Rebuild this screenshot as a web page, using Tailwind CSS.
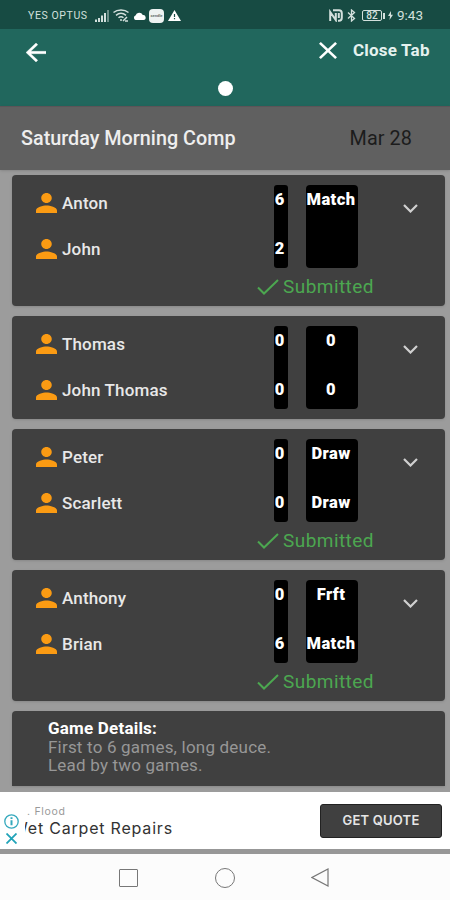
<!DOCTYPE html>
<html lang="en">
<head>
  <meta charset="UTF-8" />
  <meta name="viewport" content="width=device-width, initial-scale=1.0"/>
  <title>Saturday Morning Comp</title>
  <script src="https://cdn.jsdelivr.net/npm/@tailwindcss/browser@4"></script>
</head>
<body class="h-[900px] w-[450px] overflow-hidden bg-[#9c9c9c] font-['Roboto',sans-serif] flex flex-col">

  <!-- Status bar -->
  <div class="h-[29px] shrink-0 bg-[#174b43] text-[#d3e0dd] flex items-center justify-between pl-7 pr-[27px] pt-0.5">
    <div class="flex items-center">
      <span class="text-[10.5px] leading-none tracking-[.6px] pt-0.5 w-[67px] whitespace-nowrap">YES OPTUS</span>
      <svg class="w-[14px] h-3" viewBox="0 0 14 12" fill="currentColor"><path d="M0 9.500h2V12H0zM3 8h2v4H3zM6 5.500h2V12H6zM9 3h2v9H9z"/><path d="M12 0h2v12h-2z" opacity=".45"/></svg>
      <svg class="w-4 h-[13px] ml-1" viewBox="0 0 16 13" fill="none" stroke="currentColor" stroke-width="1.500"><path d="M.5 3.500C4.500 0 11.500 0 15.500 3.500M3 6.300c3-2.500 7-2.500 10 0M5.500 8.800c1.500-1.300 3.500-1.300 5 0"/><path d="M7 11h2M10 12l4-4M12 12h3"/></svg>
      <svg class="w-[13px] h-2 ml-1" viewBox="0 0 13 8" fill="#fff"><path d="M2.500 8a2.400 2.400 0 0 1 0-4.500A4 4 0 0 1 9.800 3 2.500 2.500 0 0 1 10.500 8z"/></svg>
      <span class="w-[15px] h-[14px] ml-[3px] rounded-sm bg-[#edf2f1] text-[#68706e] text-[4px] font-bold leading-[13px] text-center">sendle</span>
      <svg class="w-[13px] h-[11px] ml-1" viewBox="0 0 13 11"><path d="M6.500 0 13 11H0z" fill="#fff"/><path d="M6.500 4v3M6.500 8v1.300" stroke="#174b43" stroke-width="1.200"/></svg>
    </div>
    <div class="flex items-center">
      <svg class="w-[14px] h-[13px]" viewBox="0 0 14 13" fill="none" stroke="currentColor" stroke-width="2"><path d="M1.200 12V3l5.600 8V4M4 1.200h6q2.800 0 2.800 3v4.600q0 3-2.800 3H9M9.800 4v5"/></svg>
      <svg class="w-[9px] h-[13px] ml-1" viewBox="0 0 9 13" fill="none" stroke="currentColor" stroke-width="1.300"><path d="m1 3.500 6.500 6L4.500 12V1l3 2.500-6.500 6"/></svg>
      <span class="w-5 h-[11px] ml-1.5 border border-current rounded-xs text-[10px] leading-[9px] text-center font-medium">82</span>
      <span class="w-0.5 h-1.5 ml-px bg-current"></span>
      <svg class="w-[5px] h-[9px] ml-[3px]" viewBox="0 0 5 9" fill="currentColor"><path d="M3 0 0 5h2L1.500 9 5 3.800H3z"/></svg>
      <span class="text-[13.5px] leading-none ml-1">9:43</span>
    </div>
  </div>

  <!-- App bar -->
  <header class="h-[77px] shrink-0 bg-[#21675d] text-white flex flex-col">
    <div class="h-[46px] flex items-center pl-[26px] pr-5">
      <svg class="w-5 h-[19px]" viewBox="4 4 16 16" preserveAspectRatio="none" fill="currentColor" stroke="currentColor" stroke-width=".3"><path d="M20 11H7.830l5.590-5.590L12 4l-8 8 8 8 1.410-1.410L7.830 13H20v-2z"/></svg>
      <svg class="w-[18px] h-[17px] ml-auto mb-1" viewBox="5 5 14 14" preserveAspectRatio="none" fill="currentColor"><path d="M19 6.410 17.590 5 12 10.590 6.410 5 5 6.410 10.590 12 5 17.590 6.410 19 12 13.410 17.590 19 19 17.590 13.410 12z"/></svg>
      <span class="ml-4 mb-[3px] w-[77px] whitespace-nowrap text-[17px] leading-none tracking-[.2px] font-bold text-[#e5f2ef]">Close Tab</span>
    </div>
    <span class="w-[15px] h-[15px] mt-1.5 rounded-full bg-white self-center"></span>
  </header>

  <!-- Competition title -->
  <div class="h-16 shrink-0 bg-[#606060] border-t border-[#5c5458] shadow-sm flex items-center justify-between pl-[21px] pr-[38px] text-[19.800px] leading-none">
    <h1 class="font-medium text-[#eee]">Saturday Morning Comp</h1>
    <span class="text-[#1c1c1c] tracking-[.1px]">Mar 28</span>
  </div>

  <!-- Matches -->
  <main class="h-[622px] shrink-0 pt-[5px] pl-3 pr-[5px] overflow-hidden">
    <div id="matches" class="flex flex-col gap-2.5"></div>
    <section class="mt-2.5 h-[75px] rounded-t bg-[#404040] shadow-sm pl-9 pt-2 text-[17px] leading-[18.500px] tracking-[.2px] text-[#979797]">
      <h2 class="font-bold text-white">Game Details:</h2>
      <p>First to 6 games, long deuce.</p>
      <p>Lead by two games.</p>
    </section>
  </main>

  <!-- Ad banner -->
  <aside class="h-[57px] shrink-0 bg-white flex items-center pr-2">
    <div class="w-[25px] pl-1 pt-4 flex flex-col gap-1">
      <svg class="w-[15px] h-[15px]" viewBox="0 0 15 15" fill="none" stroke="#35a9bd" stroke-width="1.300"><circle cx="7.500" cy="7.500" r="6.700"/><path d="M7.500 6.300v5M7.500 3.300v1.700" stroke-width="2"/></svg>
      <svg class="w-[11px] h-[11px] ml-0.5" viewBox="0 0 11 11" stroke="#20a3b8" stroke-width="1.800"><path d="m.5.5 10 10M10.500.5l-10 10"/></svg>
    </div>
    <div class="w-[200px] overflow-hidden whitespace-nowrap font-['Inter',sans-serif]">
      <p class="pl-0.5 text-[10.5px] leading-[15px] tracking-[.7px] text-[#999]">. Flood</p>
      <p class="-ml-[13px] text-[16px] leading-[18px] tracking-[.8px] text-[#333]">Wet Carpet Repairs</p>
    </div>
    <button class="ml-auto w-[122px] h-[34px] rounded-[3px] bg-[#404040] border border-[#222] text-[#e6e6e6] text-[13px] leading-none font-semibold font-['Inter',sans-serif] tracking-[.2px]">GET QUOTE</button>
  </aside>
  <div class="h-[5px] shrink-0 bg-[#979797]"></div>

  <!-- System navigation -->
  <nav class="grow bg-[#fcfcfc] flex justify-center items-center gap-[77px] pr-0.5 pt-px text-[#777]">
    <span class="w-[19px] h-[18px] border border-current rounded-[1px]"></span>
    <span class="w-5 h-5 border border-current rounded-full"></span>
    <svg class="w-[18px] h-[19px] -ml-px" viewBox="0 0 18 19" fill="none" stroke="currentColor" stroke-width="1.200"><path d="M17 1v17L1 9.500z"/></svg>
  </nav>

  <script>
  const matches = [
    { players: ["Anton", "John"], games: [6, 2], result: ["Match", ""], submitted: true },
    { players: ["Thomas", "John Thomas"], games: [0, 0], result: ["0", "0"], submitted: false },
    { players: ["Peter", "Scarlett"], games: [0, 0], result: ["Draw", "Draw"], submitted: true },
    { players: ["Anthony", "Brian"], games: [0, 6], result: ["Frft", "Match"], submitted: true }
  ];

  const container = document.getElementById("matches");

  matches.forEach(match => {
    const card = document.createElement("div");
    card.className = "rounded bg-[#404040] shadow-sm pt-2.5 " + (match.submitted ? "h-[131px]" : "h-[103px]");

    card.innerHTML = `
      <div class="flex h-[83px]">
        <div class="w-[262px] pl-6 -mt-[5px] flex flex-col">
          ${match.players.map(name => `
            <div class="h-[46px] shrink-0 flex items-center gap-[5px]">
              <svg class="w-[21px] h-5" viewBox="4 4 16 16" preserveAspectRatio="none" fill="#fb9b13"><path d="M12 12c2.210 0 4-1.790 4-4s-1.790-4-4-4-4 1.790-4 4 1.790 4 4 4zm0 2c-2.670 0-8 1.340-8 4v2h16v-2c0-2.660-5.330-4-8-4z"/></svg>
              <span class="text-[17px] leading-none tracking-[.15px] font-medium text-[#e8e8e8]">${name}</span>
            </div>
          `).join('')}
        </div>
        <div class="w-3.5 h-[83px] rounded-[3px] bg-black text-white text-[16.500px] font-black flex flex-col pt-[5px] pr-[3px] items-center">
          ${match.games.map(g => `<span class="h-[48.5px] shrink-0 leading-5">${g}</span>`).join('')}
        </div>
        <div class="ml-[18px] w-[52px] h-[83px] rounded bg-black text-white text-[16.500px] font-black tracking-[.4px] flex flex-col pt-[5px] pr-0.5 items-center">
          ${match.result.map(r => `<span class="h-[48.5px] shrink-0 leading-5">${r}</span>`).join('')}
        </div>
        <svg class="w-[15px] h-[9px] ml-[45px] mt-[19px]" viewBox="0 0 15 9" fill="none" stroke="#d0d0d0" stroke-width="2.200"><path d="m1 1 6.500 6.500L14 1"/></svg>
      </div>
      ${match.submitted ? `
        <div class="flex items-center pl-[245px] pt-[7px] text-[#4ca750]">
          <svg class="w-[22px] h-4" viewBox="0 0 22 16" fill="none" stroke="currentColor" stroke-width="2"><path d="m1 8.500 6 6L21 1"/></svg>
          <span class="ml-1 pt-px text-[19px] leading-[22px] tracking-[.45px]">Submitted</span>
        </div>
      ` : ''}
    `;

    container.appendChild(card);
  });
  </script>

</body>
</html>
